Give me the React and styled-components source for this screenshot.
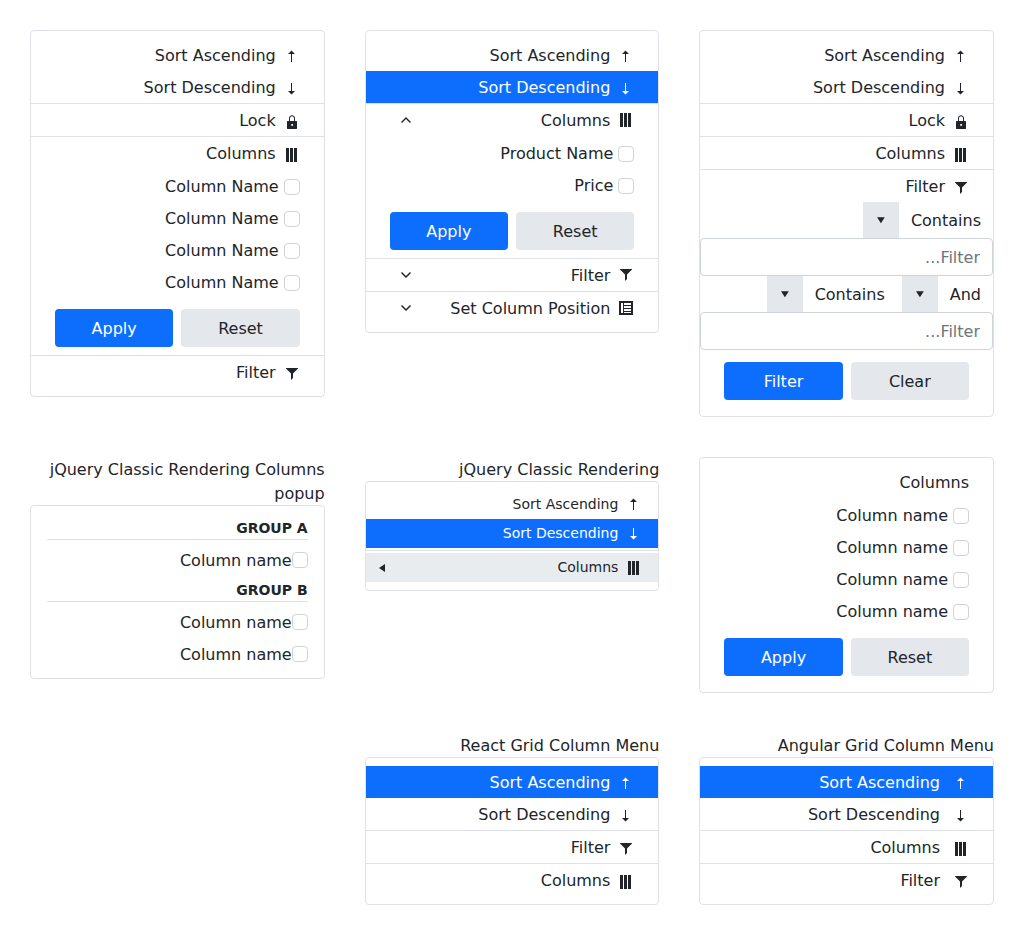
import React from "react";
import styled, { createGlobalStyle, css } from "styled-components";

const GlobalStyle = createGlobalStyle`
  *, *::before, *::after { box-sizing: border-box; }
  body {
    margin: 0;
    background: #fff;
    color: #212529;
    font: 16px/24px "DejaVu Sans", sans-serif;
  }
`;

const Page = styled.main`
  display: grid;
  grid-template-columns: repeat(3, minmax(0, 1fr));
  align-items: start;
  gap: 40px;
  padding: 30px;
`;

const Cell = styled.section`
  min-width: 0;
`;

const Heading = styled.div`
  padding-top: 1px;
  margin-bottom: -1px;
`;

const Menu = styled.div`
  border: 1px solid #dee2e6;
  border-radius: 4px;
  padding: 8px 0;
`;

const Section = styled.div`
  & + & {
    border-top: 1px solid #dee2e6;
  }
`;

const Row = styled.div`
  display: flex;
  align-items: center;
  gap: ${(p) => p.$gap || 8}px;
  height: 32px;
  padding: 5px 24px 3px;
  white-space: nowrap;
  ${(p) =>
    p.$selected &&
    css`
      background: #0d6efd;
      color: #fff;
    `}
`;

const CompactRow = styled(Row)`
  height: 29px;
  padding: 4px 16px;
  font-size: 14px;
  line-height: 21px;
  ${(p) =>
    p.$hover &&
    css`
      background: #e9ecef;
      padding-left: 8px;
    `}
`;

const Separator = styled.div`
  height: 1px;
  margin: 2px 0;
  background: #dee2e6;
`;

const Svg = styled.svg`
  display: block;
  flex: none;
  width: 16px;
  height: 16px;
  fill: currentColor;
  margin-top: ${(p) => p.$drop || 0}px;
`;

const Toggle = styled.span`
  margin: 0 auto 0 8px;
`;

const SubmenuMark = styled.span`
  margin-right: auto;
`;

const CheckList = styled.div`
  padding: 1px 24px 0;
`;

const CheckLabel = styled.label`
  display: flex;
  align-items: center;
  height: 32px;
  padding-top: 2px;
  gap: ${(p) => (p.$tight ? 0 : 5)}px;
`;

const Checkbox = styled.input.attrs({ type: "checkbox" })`
  appearance: none;
  width: 16px;
  height: 16px;
  margin: ${(p) => (p.$tight ? -2 : 0)}px 0 0;
  border: 1px solid #ced4da;
  border-radius: 4px;
  background: #fff;
`;

const Actions = styled.div`
  display: flex;
  gap: 8px;
  padding: ${(p) => p.$top || 11}px 24px 8px;
`;

const Button = styled.button`
  flex: 1 1 0;
  height: 38px;
  padding: 2px 0 0;
  border: 0;
  border-radius: 4px;
  font: inherit;
  color: ${(p) => (p.$primary ? "#fff" : "#212529")};
  background: ${(p) => (p.$primary ? "#0d6efd" : "#e4e7eb")};
`;

const Dropdowns = styled.div`
  display: flex;
  gap: 5px;
`;

const Dropdown = styled.div`
  display: flex;
  height: 36px;
  line-height: 38px;
`;

const DropdownText = styled.span`
  padding: 0 12px;
`;

const DropdownButton = styled.span`
  display: flex;
  align-items: center;
  justify-content: center;
  width: 36px;
  background: #e4e7eb;
`;

const TextBox = styled.input`
  display: block;
  width: 100%;
  height: 38px;
  padding: 6px 12px;
  border: 1px solid #ced4da;
  border-radius: 4px;
  font: inherit;
  color: inherit;
  &::placeholder {
    color: #6c757d;
    opacity: 1;
  }
`;

const GroupMenu = styled(Menu)`
  padding: 8px 16px;
`;

const GroupTitle = styled.div`
  margin: 4px 0;
  border-bottom: 1px solid #dee2e6;
  font-size: 14px;
  line-height: 21px;
  font-weight: 700;
  text-transform: uppercase;
`;

const paths = {
  asc: "M224 416h32V160h96L240 48 128 160h96z",
  desc: "M224 64h32v256h96L240 432 128 320h96z",
  lock: "M400 224h-48v-88c0-53-43-96-96-96s-96 43-96 96v88h-48c-9 0-16 7-16 16v224c0 9 7 16 16 16h288c9 0 16-7 16-16V240c0-9-7-16-16-16zM192 136c0-35 29-64 64-64s64 29 64 64v88H192zM288 376h-56v-56h56z",
  columns: "M64 32h96v448H64zM192 32h96v448h-96zM320 32h96v448h-96z",
  filter: "M64 64v16l160 160v208l64-64V240L448 80V64z",
  up: "M256 160 96 320l32 32 128-128 128 128 32-32z",
  down: "M256 352 96 192l32-32 128 128 128-128 32 32z",
  caretDown: "M128 168h250L253 360z",
  caretLeft: "m160 256 192 128V128z",
  position:
    "M32 32v448h448V32zM96 96h64v320H96zM192 96h224v64H192zM192 192h224v64H192zM192 288h224v64H192zM192 384h224v32H192z",
};

function Icon({ name, drop }) {
  return (
    <Svg viewBox="0 0 512 512" $drop={drop} aria-hidden="true">
      <path fillRule="evenodd" d={paths[name]} />
    </Svg>
  );
}

function Item({ icon, children, selected, gap }) {
  return (
    <Row $selected={selected} $gap={gap}>
      {icon && <Icon name={icon} drop={2} />}
      <span>{children}</span>
    </Row>
  );
}

function ExpandItem({ icon, children, open }) {
  return (
    <Row>
      <Icon name={icon} drop={-2} />
      <span>{children}</span>
      <Toggle>
        <Icon name={open ? "up" : "down"} drop={-2} />
      </Toggle>
    </Row>
  );
}

function Checks({ names }) {
  return (
    <CheckList>
      {names.map((name, i) => (
        <CheckLabel key={i}>
          <Checkbox />
          {name}
        </CheckLabel>
      ))}
    </CheckList>
  );
}

function GroupCheck() {
  return (
    <CheckLabel $tight>
      <Checkbox $tight />
      Column name
    </CheckLabel>
  );
}

function ActionButtons({ apply = "Apply", reset = "Reset", top }) {
  return (
    <Actions $top={top}>
      <Button>{reset}</Button>
      <Button $primary>{apply}</Button>
    </Actions>
  );
}

function FilterDropdown({ children }) {
  return (
    <Dropdown>
      <DropdownText>{children}</DropdownText>
      <DropdownButton>
        <Icon name="caretDown" />
      </DropdownButton>
    </Dropdown>
  );
}

export default function App() {
  return (
    <>
      <GlobalStyle />
      <Page dir="rtl">
        <Cell>
          <Menu>
            <Section>
              <Item icon="asc">Sort Ascending</Item>
              <Item icon="desc">Sort Descending</Item>
            </Section>
            <Section>
              <Item icon="lock">Lock</Item>
            </Section>
            <Section>
              <Item icon="columns">Columns</Item>
            </Section>
            <Section>
              <Item icon="filter">Filter</Item>
              <FilterDropdown>Contains</FilterDropdown>
              <TextBox placeholder="Filter..." />
              <Dropdowns>
                <FilterDropdown>And</FilterDropdown>
                <FilterDropdown>Contains</FilterDropdown>
              </Dropdowns>
              <TextBox placeholder="Filter..." />
              <ActionButtons apply="Filter" reset="Clear" top={12} />
            </Section>
          </Menu>
        </Cell>

        <Cell>
          <Menu>
            <Section>
              <Item icon="asc">Sort Ascending</Item>
              <Item icon="desc" selected>
                Sort Descending
              </Item>
            </Section>
            <Section>
              <ExpandItem icon="columns" open>
                Columns
              </ExpandItem>
              <Checks names={["Product Name", "Price"]} />
              <ActionButtons />
            </Section>
            <Section>
              <ExpandItem icon="filter">Filter</ExpandItem>
            </Section>
            <Section>
              <ExpandItem icon="position">Set Column Position</ExpandItem>
            </Section>
          </Menu>
        </Cell>

        <Cell>
          <Menu>
            <Section>
              <Item icon="asc">Sort Ascending</Item>
              <Item icon="desc">Sort Descending</Item>
            </Section>
            <Section>
              <Item icon="lock">Lock</Item>
            </Section>
            <Section>
              <Item icon="columns">Columns</Item>
              <Checks names={Array(4).fill("Column Name")} />
              <ActionButtons />
            </Section>
            <Section>
              <Item icon="filter">Filter</Item>
            </Section>
          </Menu>
        </Cell>

        <Cell>
          <Menu>
            <Item>Columns</Item>
            <Checks names={Array(4).fill("Column name")} />
            <ActionButtons />
          </Menu>
        </Cell>

        <Cell>
          <Heading>jQuery Classic Rendering</Heading>
          <Menu>
            <CompactRow>
              <Icon name="asc" drop={1} />
              <span>Sort Ascending</span>
            </CompactRow>
            <CompactRow $selected>
              <Icon name="desc" drop={1} />
              <span>Sort Descending</span>
            </CompactRow>
            <Separator />
            <CompactRow $hover>
              <Icon name="columns" drop={1} />
              <span>Columns</span>
              <SubmenuMark>
                <Icon name="caretLeft" drop={1} />
              </SubmenuMark>
            </CompactRow>
          </Menu>
        </Cell>

        <Cell>
          <Heading>jQuery Classic Rendering Columns popup</Heading>
          <GroupMenu>
            <GroupTitle>Group A</GroupTitle>
            <GroupCheck />
            <GroupTitle>Group B</GroupTitle>
            <GroupCheck />
            <GroupCheck />
          </GroupMenu>
        </Cell>

        <Cell>
          <Heading>Angular Grid Column Menu</Heading>
          <Menu>
            <Section>
              <Item icon="asc" selected gap={13}>
                Sort Ascending
              </Item>
              <Item icon="desc" gap={13}>
                Sort Descending
              </Item>
            </Section>
            <Section>
              <Item icon="columns" gap={13}>
                Columns
              </Item>
            </Section>
            <Section>
              <Item icon="filter" gap={13}>
                Filter
              </Item>
            </Section>
          </Menu>
        </Cell>

        <Cell>
          <Heading>React Grid Column Menu</Heading>
          <Menu>
            <Section>
              <Item icon="asc" selected>
                Sort Ascending
              </Item>
              <Item icon="desc">Sort Descending</Item>
            </Section>
            <Section>
              <Item icon="filter">Filter</Item>
            </Section>
            <Section>
              <Item icon="columns">Columns</Item>
            </Section>
          </Menu>
        </Cell>
      </Page>
    </>
  );
}
